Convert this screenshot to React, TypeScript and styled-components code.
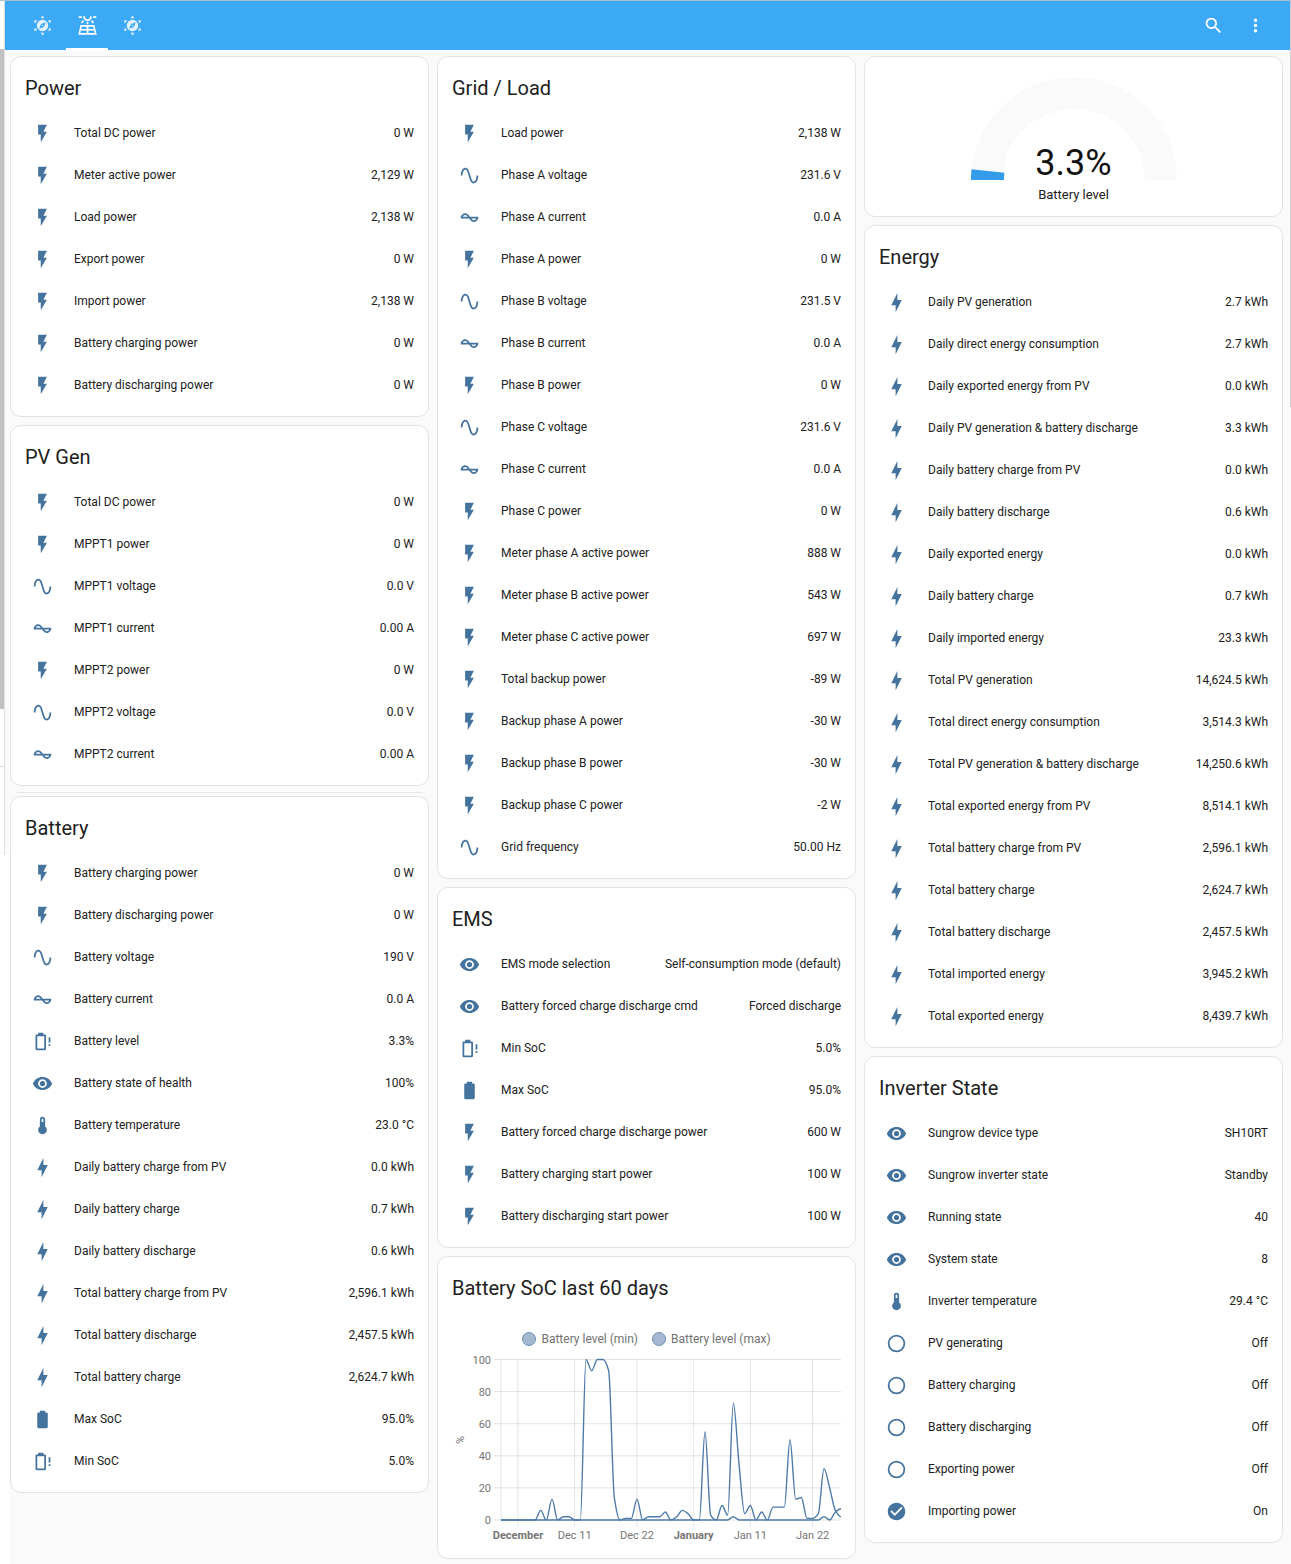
import React from "react";
import styled, { createGlobalStyle } from "styled-components";

const GlobalStyle = createGlobalStyle`
  *, *::before, *::after { box-sizing: border-box; }
  body {
    margin: 0;
    background: #fafafa;
    color: #212121;
    font-family: Roboto, "Liberation Sans", sans-serif;
    font-size: 12px;
    line-height: 16px;
  }
`;

const paths = {
  flash: "M7,2V13H10V22L17,10H13L17,2H7Z",
  bolt: "M11 15H6L13 1V9H18L11 23V15Z",
  sine: "M16.5,21C13.5,21 12.31,16.76 11.05,12.28C10.14,9.04 9,5 7.5,5C4.11,5 4,11.93 4,12H2C2,11.63 2.06,3 7.5,3C10.5,3 11.71,7.25 12.97,11.74C13.83,14.8 15,19 16.5,19C19.94,19 20.03,12.07 20.03,12H22.03C22.03,12.37 21.97,21 16.5,21Z",
  current: "M12.43 11C12.28 10.84 10 7 7 7S2.32 10.18 2 11V13H11.57C11.72 13.16 14 17 17 17S21.68 13.82 22 13V11H12.43M7 9C8.17 9 9.18 9.85 10 11H4.31C4.78 10.17 5.54 9 7 9M17 15C15.83 15 14.82 14.15 14 13H19.69C19.22 13.83 18.46 15 17 15Z",
  battery: "M16.67,4H15V2H9V4H7.33A1.33,1.33 0 0,0 6,5.33V20.67C6,21.4 6.6,22 7.33,22H16.67A1.33,1.33 0 0,0 18,20.67V5.33C18,4.6 17.4,4 16.67,4Z",
  batteryAlert: "M14 20H6V6H14M14.67 4H13V2H7V4H5.33C4.6 4 4 4.6 4 5.33V20.67C4 21.4 4.6 22 5.33 22H14.67C15.4 22 16 21.4 16 20.67V5.33C16 4.6 15.4 4 14.67 4M21 7H19V13H21V8M21 15H19V17H21V15Z",
  eye: "M12,9A3,3 0 0,0 9,12A3,3 0 0,0 12,15A3,3 0 0,0 15,12A3,3 0 0,0 12,9M12,17A5,5 0 0,1 7,12A5,5 0 0,1 12,7A5,5 0 0,1 17,12A5,5 0 0,1 12,17M12,4.5C7,4.5 2.73,7.61 1,12C2.73,16.39 7,19.5 12,19.5C17,19.5 21.27,16.39 23,12C21.27,7.61 17,4.5 12,4.5Z",
  thermometer: "M15 13V5A3 3 0 0 0 9 5V13A5 5 0 1 0 15 13M12 4A1 1 0 0 1 13 5V8H11V5A1 1 0 0 1 12 4Z",
  off: "M12,20A8,8 0 0,1 4,12A8,8 0 0,1 12,4A8,8 0 0,1 20,12A8,8 0 0,1 12,20M12,2A10,10 0 0,0 2,12A10,10 0 0,0 12,22A10,10 0 0,0 22,12A10,10 0 0,0 12,2Z",
  on: "M12 2C6.5 2 2 6.5 2 12S6.5 22 12 22 22 17.5 22 12 17.5 2 12 2M10 17L5 12L6.41 10.59L10 14.17L17.59 6.58L19 8L10 17Z",
  search: "M9.5,3A6.5,6.5 0 0,1 16,9.5C16,11.11 15.41,12.59 14.44,13.73L14.71,14H15.5L20.5,19L19,20.5L14,15.5V14.71L13.73,14.44C12.59,15.41 11.11,16 9.5,16A6.5,6.5 0 0,1 3,9.5A6.5,6.5 0 0,1 9.5,3M9.5,5C7,5 5,7 5,9.5C5,12 7,14 9.5,14C12,14 14,12 14,9.5C14,7 12,5 9.5,5Z",
  menu: "M12,16A2,2 0 0,1 14,18A2,2 0 0,1 12,20A2,2 0 0,1 10,18A2,2 0 0,1 12,16M12,10A2,2 0 0,1 14,12A2,2 0 0,1 12,14A2,2 0 0,1 10,12A2,2 0 0,1 12,10M12,4A2,2 0 0,1 14,6A2,2 0 0,1 12,8A2,2 0 0,1 10,6A2,2 0 0,1 12,4Z",
  sunCompass: "M12 5.5A6.5 6.5 0 1 0 12 18.5A6.5 6.5 0 1 0 12 5.5M15.8 8.2L13.6 13.6L8.2 15.8L10.4 10.4ZM12 11.2A.8 .8 0 1 0 12 12.8A.8 .8 0 1 0 12 11.2ZM12 .5L14.2 3.6H9.8ZM12 23.5L14.2 20.4H9.8ZM2 6.3L5.8 6L3.6 9.8ZM22 6.3L18.2 6L20.4 9.8ZM2 17.7L5.8 18L3.6 14.2ZM22 17.7L18.2 18L20.4 14.2Z",
  solar: "M4 11.5H20L22.5 22.5H1.5ZM5.4 13.3L4.8 16H11V13.3ZM13 13.3V16H19.2L18.6 13.3ZM4.4 17.8L3.8 20.7H11V17.8ZM13 17.8V20.7H20.2L19.6 17.8ZM11 8H13V10.5H11V8M15.76 7.21L17.18 5.79L19.6 8.2L18.19 9.62L15.76 7.21M4.4 8.2L6.83 5.79L8.24 7.21L5.81 9.62L4.4 8.2M2 1.5H5.5V3.5H2V1.5M18.5 1.5H22V3.5H18.5V1.5M12 7C14.76 7 17 4.76 17 1.5H15C15 3.65 13.65 5 12 5S9 3.65 9 1.5H7C7 4.76 9.24 7 12 7Z",
};
type IconName = keyof typeof paths;

const Svg = styled.svg`
  display: block;
  flex: none;
  width: 21px;
  height: 21px;
  fill: currentColor;
`;
const Icon = ({ name }: { name: IconName }) => (
  <Svg viewBox="0 0 24 24" aria-hidden="true">
    <path fillRule="evenodd" d={paths[name]} />
  </Svg>
);

const Shell = styled.div`
  display: flex;
  align-items: stretch;
  min-height: 100vh;
  border-top: 1px solid #a9bfd2;
`;
const SidebarEdge = styled.aside`
  flex: none;
  width: 5px;
  background: #ffffff;
`;
const SidebarPanel = styled.div`
  height: 854px;
  padding-top: 48px;
  border-right: 1px solid #e0e0e0;
`;
const ScrollThumb = styled.div`
  height: 660px;
  background: #c1c1c1;
`;
const SidebarRule = styled.div`
  height: 1px;
  margin-top: 57px;
  background: #e0e0e0;
`;
const Main = styled.main`
  flex: 1;
  min-width: 0;
`;
const PageEdge = styled.div`
  flex: none;
  width: 1px;

  &::before {
    content: "";
    display: block;
    height: 406px;
    background: #cdcdcd;
  }
`;
const Toolbar = styled.header`
  display: flex;
  justify-content: space-between;
  height: 49px;
  padding: 0 14px 0 16px;
  background: #3ca9f7;
  color: #ffffff;
`;
const Tabs = styled.nav`
  display: flex;
  gap: 3px;
`;
const Tab = styled.button<{ $active?: boolean }>`
  display: flex;
  align-items: center;
  justify-content: center;
  width: 42px;
  padding: 2px 0 0;
  border: 0;
  border-bottom: 2px solid ${(p) => (p.$active ? "#ffffff" : "transparent")};
  background: none;
  color: inherit;
  opacity: ${(p) => (p.$active ? 1 : 0.85)};
`;
const Actions = styled.div`
  display: flex;
  align-items: center;
`;
const IconButton = styled.button`
  display: flex;
  align-items: center;
  justify-content: center;
  width: 42px;
  height: 42px;
  padding: 0;
  border: 0;
  background: none;
  color: inherit;
`;
const Board = styled.div`
  display: grid;
  grid-template-columns: repeat(3, minmax(0, 1fr));
  align-items: start;
  gap: 8px;
  padding: 6px 7px 5px 5px;
  background: linear-gradient(#ffffff, #ffffff) 0 805px / 4px 100% no-repeat;
`;
const Column = styled.div`
  display: flex;
  flex-direction: column;
`;
const Card = styled.section`
  padding: 0 14px 14px;
  border: 1px solid #e3e3e3;
  border-radius: 11px;
  background: #ffffff;

  & + & { margin-top: 8px; }
`;
const Seam = styled.div`
  height: 10px;
  padding: 6px 6px 0;

  &::before {
    content: "";
    display: block;
    border-top: 1px solid #e6e6e6;
  }
`;
const Title = styled.h2`
  margin: 0;
  padding: 17px 0 14px;
  font-size: 20px;
  font-weight: 400;
  line-height: 28px;
`;
const Rows = styled.ul`
  display: flex;
  flex-direction: column;
  gap: 8px;
  margin: 0;
  padding: 0;
  list-style: none;
`;
const Row = styled.li`
  display: flex;
  align-items: center;
  height: 34px;
`;
const RowIcon = styled.span`
  display: flex;
  flex: none;
  width: 49px;
  padding-left: 7px;
  color: #44739e;
`;
const RowName = styled.span`
  flex: 1;
  min-width: 0;
  overflow: hidden;
  white-space: nowrap;
  text-overflow: ellipsis;
`;
const RowValue = styled.span`
  flex: none;
  white-space: nowrap;
`;

type Item = [IconName, string, string];
const EntityCard = ({ title, items }: { title: string; items: Item[] }) => (
  <Card>
    <Title>{title}</Title>
    <Rows>
      {items.map(([icon, name, value]) => (
        <Row key={name}>
          <RowIcon><Icon name={icon} /></RowIcon>
          <RowName>{name}</RowName>
          <RowValue>{value}</RowValue>
        </Row>
      ))}
    </Rows>
  </Card>
);

const power: Item[] = [
  ["flash", "Total DC power", "0 W"],
  ["flash", "Meter active power", "2,129 W"],
  ["flash", "Load power", "2,138 W"],
  ["flash", "Export power", "0 W"],
  ["flash", "Import power", "2,138 W"],
  ["flash", "Battery charging power", "0 W"],
  ["flash", "Battery discharging power", "0 W"],
];
const pvGen: Item[] = [
  ["flash", "Total DC power", "0 W"],
  ["flash", "MPPT1 power", "0 W"],
  ["sine", "MPPT1 voltage", "0.0 V"],
  ["current", "MPPT1 current", "0.00 A"],
  ["flash", "MPPT2 power", "0 W"],
  ["sine", "MPPT2 voltage", "0.0 V"],
  ["current", "MPPT2 current", "0.00 A"],
];
const battery: Item[] = [
  ["flash", "Battery charging power", "0 W"],
  ["flash", "Battery discharging power", "0 W"],
  ["sine", "Battery voltage", "190 V"],
  ["current", "Battery current", "0.0 A"],
  ["batteryAlert", "Battery level", "3.3%"],
  ["eye", "Battery state of health", "100%"],
  ["thermometer", "Battery temperature", "23.0 °C"],
  ["bolt", "Daily battery charge from PV", "0.0 kWh"],
  ["bolt", "Daily battery charge", "0.7 kWh"],
  ["bolt", "Daily battery discharge", "0.6 kWh"],
  ["bolt", "Total battery charge from PV", "2,596.1 kWh"],
  ["bolt", "Total battery discharge", "2,457.5 kWh"],
  ["bolt", "Total battery charge", "2,624.7 kWh"],
  ["battery", "Max SoC", "95.0%"],
  ["batteryAlert", "Min SoC", "5.0%"],
];
const grid: Item[] = [
  ["flash", "Load power", "2,138 W"],
  ["sine", "Phase A voltage", "231.6 V"],
  ["current", "Phase A current", "0.0 A"],
  ["flash", "Phase A power", "0 W"],
  ["sine", "Phase B voltage", "231.5 V"],
  ["current", "Phase B current", "0.0 A"],
  ["flash", "Phase B power", "0 W"],
  ["sine", "Phase C voltage", "231.6 V"],
  ["current", "Phase C current", "0.0 A"],
  ["flash", "Phase C power", "0 W"],
  ["flash", "Meter phase A active power", "888 W"],
  ["flash", "Meter phase B active power", "543 W"],
  ["flash", "Meter phase C active power", "697 W"],
  ["flash", "Total backup power", "-89 W"],
  ["flash", "Backup phase A power", "-30 W"],
  ["flash", "Backup phase B power", "-30 W"],
  ["flash", "Backup phase C power", "-2 W"],
  ["sine", "Grid frequency", "50.00 Hz"],
];
const ems: Item[] = [
  ["eye", "EMS mode selection", "Self-consumption mode (default)"],
  ["eye", "Battery forced charge discharge cmd", "Forced discharge"],
  ["batteryAlert", "Min SoC", "5.0%"],
  ["battery", "Max SoC", "95.0%"],
  ["flash", "Battery forced charge discharge power", "600 W"],
  ["flash", "Battery charging start power", "100 W"],
  ["flash", "Battery discharging start power", "100 W"],
];
const energy: Item[] = [
  ["bolt", "Daily PV generation", "2.7 kWh"],
  ["bolt", "Daily direct energy consumption", "2.7 kWh"],
  ["bolt", "Daily exported energy from PV", "0.0 kWh"],
  ["bolt", "Daily PV generation & battery discharge", "3.3 kWh"],
  ["bolt", "Daily battery charge from PV", "0.0 kWh"],
  ["bolt", "Daily battery discharge", "0.6 kWh"],
  ["bolt", "Daily exported energy", "0.0 kWh"],
  ["bolt", "Daily battery charge", "0.7 kWh"],
  ["bolt", "Daily imported energy", "23.3 kWh"],
  ["bolt", "Total PV generation", "14,624.5 kWh"],
  ["bolt", "Total direct energy consumption", "3,514.3 kWh"],
  ["bolt", "Total PV generation & battery discharge", "14,250.6 kWh"],
  ["bolt", "Total exported energy from PV", "8,514.1 kWh"],
  ["bolt", "Total battery charge from PV", "2,596.1 kWh"],
  ["bolt", "Total battery charge", "2,624.7 kWh"],
  ["bolt", "Total battery discharge", "2,457.5 kWh"],
  ["bolt", "Total imported energy", "3,945.2 kWh"],
  ["bolt", "Total exported energy", "8,439.7 kWh"],
];
const inverter: Item[] = [
  ["eye", "Sungrow device type", "SH10RT"],
  ["eye", "Sungrow inverter state", "Standby"],
  ["eye", "Running state", "40"],
  ["eye", "System state", "8"],
  ["thermometer", "Inverter temperature", "29.4 °C"],
  ["off", "PV generating", "Off"],
  ["off", "Battery charging", "Off"],
  ["off", "Battery discharging", "Off"],
  ["off", "Exporting power", "Off"],
  ["on", "Importing power", "On"],
];

/* Gauge */
const GaugeCard = styled(Card)`
  display: flex;
  flex-direction: column;
  align-items: center;
  padding: 20px 14px 13px;
`;
const GaugeFace = styled.div`
  display: grid;
  justify-items: center;
  align-items: end;

  & > * { grid-area: 1 / 1; }
`;
const GaugeDial = styled.svg`
  display: block;
  width: 206px;
  height: 103px;
`;
const GaugeValue = styled.div`
  font-size: 36px;
  line-height: 34px;
  color: #111111;
`;
const GaugeLabel = styled.div`
  margin-top: 7px;
  font-size: 13px;
`;
const Gauge = ({ value, label }: { value: number; label: string }) => {
  const angle = Math.PI * (1 - value / 100);
  const at = (r: number) => `${103 + r * Math.cos(angle)} ${103 - r * Math.sin(angle)}`;
  return (
    <GaugeCard>
      <GaugeFace>
        <GaugeDial viewBox="0 0 206 103" aria-hidden="true">
          <path d="M0 103A103 103 0 0 1 206 103H174A71 71 0 0 0 32 103Z" fill="#fafafa" />
          <path d={`M0 103A103 103 0 0 1 ${at(103)}L${at(70)}A70 70 0 0 0 33 103Z`} fill="#349be8" />
        </GaugeDial>
        <GaugeValue>{value}%</GaugeValue>
      </GaugeFace>
      <GaugeLabel>{label}</GaugeLabel>
    </GaugeCard>
  );
};

/* Chart */
const Legend = styled.div`
  display: flex;
  justify-content: center;
  gap: 14px;
  margin: 15px 0 0;
  color: #727272;
`;
const LegendItem = styled.span`
  display: flex;
  align-items: center;
  gap: 5px;

  &::before {
    content: "";
    width: 14px;
    height: 14px;
    border: 1px solid #6a8fb5;
    border-radius: 50%;
    background: #a4b8d1;
  }
`;
const Plot = styled.svg`
  display: block;
  width: 100%;
  height: auto;
`;
const AxisText = styled.text<{ $bold?: boolean }>`
  font-size: 11px;
  font-weight: ${(p) => (p.$bold ? 700 : 400)};
  fill: #757575;
`;

const LEFT = 49;
const STEP = 17 / 3;
const yOf = (v: number) => 173 - v * 1.605;

const maxSeries = [
  0, 0, 0, 0, 0, 0, 0, 6, 0, 13, 0, 2, 2, 0, 0, 100, 93, 100, 100, 93, 14, 0, 1, 1, 13,
  0, 2, 2, 2, 5, 0, 2, 6, 4, 0, 0, 55, 3, 0, 9, 3, 73, 35, 4, 9, 0, 5, 0, 8, 8, 8, 50,
  13, 14, 1, 1, 4, 32, 20, 6, 2,
];
const minSeries = maxSeries.map((_, i) => (i === 41 || i === 57 ? 2 : i === 59 ? 5 : i === 60 ? 7 : 0));

/* Monotone cubic interpolation through one sample per day. */
const curve = (values: number[]) => {
  const slope = values.map((v, i) => {
    if (i === 0 || i === values.length - 1) return 0;
    const a = v - values[i - 1];
    const b = values[i + 1] - v;
    return a * b <= 0 ? 0 : (2 * a * b) / (a + b);
  });
  const x = (i: number) => LEFT + i * STEP;
  return values.reduce((d, v, i) => {
    if (i === 0) return `M${x(0)} ${yOf(v)}`;
    const p = values[i - 1];
    return `${d}C${x(i - 1) + STEP / 3} ${yOf(p + slope[i - 1] / 3)} ${x(i) - STEP / 3} ${yOf(v - slope[i] / 3)} ${x(i)} ${yOf(v)}`;
  }, "");
};

const ticks: [number, string, boolean][] = [
  [3, "December", true],
  [13, "Dec 11", false],
  [24, "Dec 22", false],
  [34, "January", true],
  [44, "Jan 11", false],
  [55, "Jan 22", false],
];

const HistoryCard = () => (
  <Card>
    <Title>Battery SoC last 60 days</Title>
    <Legend>
      <LegendItem>Battery level (min)</LegendItem>
      <LegendItem>Battery level (max)</LegendItem>
    </Legend>
    <Plot viewBox="0 0 389 197" role="img" aria-label="Battery level, last 60 days">
      <g stroke="#000000" strokeOpacity="0.11">
        {[0, 20, 40, 60, 80, 100].map((v) => (
          <path key={v} d={`M${LEFT - 7} ${yOf(v)}H389`} />
        ))}
        <path d={`M${LEFT} ${yOf(100)}V${yOf(0)}`} />
        {ticks.map(([day]) => (
          <path key={day} d={`M${LEFT + day * STEP} ${yOf(100)}V${yOf(0) + 7}`} />
        ))}
      </g>
      {[0, 20, 40, 60, 80, 100].map((v) => (
        <AxisText key={v} x="39" y={yOf(v) + 4} textAnchor="end">{v}</AxisText>
      ))}
      {ticks.map(([day, label, bold]) => (
        <AxisText key={label} $bold={bold} x={LEFT + day * STEP} y="192" textAnchor="middle">{label}</AxisText>
      ))}
      <AxisText transform="translate(12 93) rotate(-90)" textAnchor="middle">%</AxisText>
      <g fill="none" stroke="#4f7ba8" strokeWidth="1.4">
        <path d={curve(minSeries)} />
        <path d={curve(maxSeries)} />
      </g>
    </Plot>
  </Card>
);

export default function App() {
  return (
    <>
      <GlobalStyle />
      <Shell>
        <SidebarEdge>
          <SidebarPanel>
            <ScrollThumb />
            <SidebarRule />
          </SidebarPanel>
        </SidebarEdge>
        <Main>
          <Toolbar>
            <Tabs aria-label="Views">
              <Tab aria-label="Solar overview"><Icon name="sunCompass" /></Tab>
              <Tab $active aria-current="page" aria-label="Solar power"><Icon name="solar" /></Tab>
              <Tab aria-label="Solar details"><Icon name="sunCompass" /></Tab>
            </Tabs>
            <Actions>
              <IconButton aria-label="Search"><Icon name="search" /></IconButton>
              <IconButton aria-label="Menu"><Icon name="menu" /></IconButton>
            </Actions>
          </Toolbar>
          <Board>
            <Column>
              <EntityCard title="Power" items={power} />
              <EntityCard title="PV Gen" items={pvGen} />
              <Seam />
              <EntityCard title="Battery" items={battery} />
            </Column>
            <Column>
              <EntityCard title="Grid / Load" items={grid} />
              <EntityCard title="EMS" items={ems} />
              <HistoryCard />
            </Column>
            <Column>
              <Gauge value={3.3} label="Battery level" />
              <EntityCard title="Energy" items={energy} />
              <EntityCard title="Inverter State" items={inverter} />
            </Column>
          </Board>
        </Main>
        <PageEdge />
      </Shell>
    </>
  );
}
